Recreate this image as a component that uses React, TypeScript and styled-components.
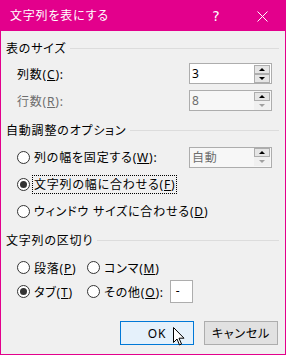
import React from "react";
import styled, { createGlobalStyle } from "styled-components";

const PINK = "#E3008C";

const GlobalStyle = createGlobalStyle`
  html, body {
    margin: 0;
    padding: 0;
    background: #f0f0f0;
  }
  body {
    font-family: "Noto Sans", "Noto Sans CJK JP", sans-serif;
    font-size: 12px;
    font-feature-settings: "palt";
    letter-spacing: 0.8px;
    color: #000;
  }
`;

const Window = styled.div`
  position: relative;
  width: 286px;
  height: 355px;
  box-sizing: border-box;
  border: 1px solid ${PINK};
  background: #f0f0f0;
  display: flex;
  flex-direction: column;
  overflow: hidden;
`;

const TitleBar = styled.div`
  height: 30px;
  flex: none;
  background: ${PINK};
  color: #fff;
  display: flex;
  align-items: center;
  padding-left: 9px;
`;

const Title = styled.div`
  flex: 1;
  font-size: 12px;
  line-height: 16px;
`;

const CaptionButton = styled.div`
  width: 46px;
  height: 30px;
  display: flex;
  align-items: center;
  justify-content: center;
  font-family: "DejaVu Sans", sans-serif;
  font-size: 14px;
  letter-spacing: 0;
`;

const Content = styled.div`
  flex: 1;
  display: flex;
  flex-direction: column;
  padding: 9px 6px 0 5px;
`;

const Heading = styled.div<{ $top?: number }>`
  display: flex;
  align-items: center;
  gap: 4px;
  height: 16px;
  margin-top: ${({ $top }) => $top ?? 0}px;
  white-space: nowrap;

  &::after {
    content: "";
    flex: 1;
    height: 1px;
    background: #dcdcdc;
  }
`;

const FieldRow = styled.div<{ $top: number; $height?: number }>`
  display: flex;
  align-items: center;
  height: ${({ $height }) => $height ?? 21}px;
  margin-top: ${({ $top }) => $top}px;
  padding-left: 11px;
`;

const FieldLabel = styled.span<{ $disabled?: boolean }>`
  flex: 1;
  color: ${({ $disabled }) => ($disabled ? "#6d6d6d" : "#000")};
  white-space: nowrap;
`;

const Key = styled.u`
  text-underline-offset: 1px;
`;

const SpinBox = styled.div<{ $disabled?: boolean }>`
  width: 83px;
  height: 21px;
  box-sizing: border-box;
  margin-right: 7px;
  border: 1px solid #adadad;
  background: ${({ $disabled }) => ($disabled ? "#f7f7f7" : "#fff")};
  display: flex;
  align-items: center;
`;

const SpinValue = styled.span<{ $disabled?: boolean }>`
  flex: 1;
  padding-left: 2px;
  color: ${({ $disabled }) => ($disabled ? "#6d6d6d" : "#000")};
`;

const SpinButtons = styled.div`
  display: flex;
  flex-direction: column;
  align-self: stretch;
  justify-content: center;
  width: 16px;
  margin-right: 1px;
`;

const SpinButton = styled.div<{ $disabled?: boolean }>`
  height: 9px;
  box-sizing: border-box;
  border: 1px solid ${({ $disabled }) => ($disabled ? "transparent" : "#adadad")};
  background: ${({ $disabled }) => ($disabled ? "#f0f0f0" : "#e5e5e5")};
  display: flex;
  align-items: center;
  justify-content: center;
`;

const Arrow = styled.span<{ $down?: boolean; $disabled?: boolean }>`
  width: 0;
  height: 0;
  border-left: 3px solid transparent;
  border-right: 3px solid transparent;
  ${({ $down, $disabled }) =>
    $down
      ? `border-top: 3px solid ${$disabled ? "#a0a0a0" : "#000"};`
      : `border-bottom: 3px solid ${$disabled ? "#a0a0a0" : "#000"};`}
`;

const RadioLabel = styled.label`
  display: flex;
  align-items: center;
  gap: 4px;
  white-space: nowrap;
`;

const RadioCircle = styled.span<{ $checked?: boolean }>`
  position: relative;
  width: 13px;
  height: 13px;
  box-sizing: border-box;
  border: 1px solid #333;
  border-radius: 50%;
  background: #fff;
  flex: none;

  &::after {
    content: "";
    display: ${({ $checked }) => ($checked ? "block" : "none")};
    position: absolute;
    inset: 2px;
    border-radius: 50%;
    background: #333;
  }
`;

const FocusText = styled.span`
  border: 1px dotted #000;
  padding: 0 1px;
  margin-left: -2px;
  line-height: 16px;
`;

const SplitGrid = styled.div<{ $top: number }>`
  display: grid;
  grid-template-columns: 70px auto;
  align-items: center;
  height: 23px;
  margin-top: ${({ $top }) => $top}px;
  padding-left: 11px;
`;

const OtherRow = styled.div`
  display: flex;
  align-items: center;
  gap: 6px;
`;

const SmallInput = styled.div`
  width: 23px;
  height: 23px;
  box-sizing: border-box;
  border: 1px solid #adadad;
  background: #fff;
  padding-left: 5px;
  line-height: 20px;
`;

const ButtonRow = styled.div`
  display: flex;
  justify-content: flex-end;
  gap: 10px;
  margin-top: 18px;
  padding-right: 1px;
`;

const DialogButton = styled.div<{ $primary?: boolean }>`
  width: 74px;
  height: 24px;
  box-sizing: border-box;
  border: 1px solid ${({ $primary }) => ($primary ? "#0078d7" : "#adadad")};
  background: ${({ $primary }) => ($primary ? "#e5f1fb" : "#e1e1e1")};
  display: flex;
  align-items: center;
  justify-content: center;
`;

const Cursor = styled.svg`
  position: absolute;
  left: 172px;
  top: 326px;
`;

function Radio({ checked, children }: { checked?: boolean; children: React.ReactNode }) {
  return (
    <RadioLabel>
      <RadioCircle $checked={checked} />
      <span>{children}</span>
    </RadioLabel>
  );
}

function Spin({ value, disabled }: { value: string; disabled?: boolean }) {
  return (
    <SpinBox $disabled={disabled}>
      <SpinValue $disabled={disabled}>{value}</SpinValue>
      <SpinButtons>
        <SpinButton>
          <Arrow />
        </SpinButton>
        <SpinButton $disabled={disabled}>
          <Arrow $down $disabled={disabled} />
        </SpinButton>
      </SpinButtons>
    </SpinBox>
  );
}

export default function App() {
  return (
    <>
      <GlobalStyle />
      <Window>
        <TitleBar>
          <Title>文字列を表にする</Title>
          <CaptionButton>?</CaptionButton>
          <CaptionButton>
            <svg width="11" height="11" viewBox="0 0 11 11">
              <path d="M0.5 0.5 L10.5 10.5 M10.5 0.5 L0.5 10.5" stroke="#fff" strokeWidth="1" />
            </svg>
          </CaptionButton>
        </TitleBar>

        <Content>
          <Heading>表のサイズ</Heading>
          <FieldRow $top={7}>
            <FieldLabel>
              列数(<Key>C</Key>):
            </FieldLabel>
            <Spin value="3" />
          </FieldRow>
          <FieldRow $top={6}>
            <FieldLabel $disabled>
              行数(<Key>R</Key>):
            </FieldLabel>
            <Spin value="8" disabled />
          </FieldRow>

          <Heading $top={11}>自動調整のオプション</Heading>
          <FieldRow $top={8} $height={22}>
            <FieldLabel>
              <Radio>
                列の幅を固定する(<Key>W</Key>):
              </Radio>
            </FieldLabel>
            <Spin value="自動" disabled />
          </FieldRow>
          <FieldRow $top={7} $height={18}>
            <Radio checked>
              <FocusText>
                文字列の幅に合わせる(<Key>F</Key>)
              </FocusText>
            </Radio>
          </FieldRow>
          <FieldRow $top={9} $height={18}>
            <Radio>
              ウィンドウ サイズに合わせる(<Key>D</Key>)
            </Radio>
          </FieldRow>

          <Heading $top={12}>文字列の区切り</Heading>
          <SplitGrid $top={8}>
            <Radio>
              段落(<Key>P</Key>)
            </Radio>
            <Radio>
              コンマ(<Key>M</Key>)
            </Radio>
          </SplitGrid>
          <SplitGrid $top={1}>
            <Radio checked>
              タブ(<Key>T</Key>)
            </Radio>
            <OtherRow>
              <Radio>
                その他(<Key>O</Key>):
              </Radio>
              <SmallInput>-</SmallInput>
            </OtherRow>
          </SplitGrid>

          <ButtonRow>
            <DialogButton $primary>OK</DialogButton>
            <DialogButton>キャンセル</DialogButton>
          </ButtonRow>
        </Content>

        <Cursor width="13" height="19" viewBox="0 0 13 19">
          <path
            d="M0.5 0.5 L0.5 15.5 L4 12 L6.5 18 L8.5 17 L6 11.2 L11 11.2 Z"
            fill="#fff"
            stroke="#000"
            strokeWidth="1"
            strokeLinejoin="miter"
          />
        </Cursor>
      </Window>
    </>
  );
}
